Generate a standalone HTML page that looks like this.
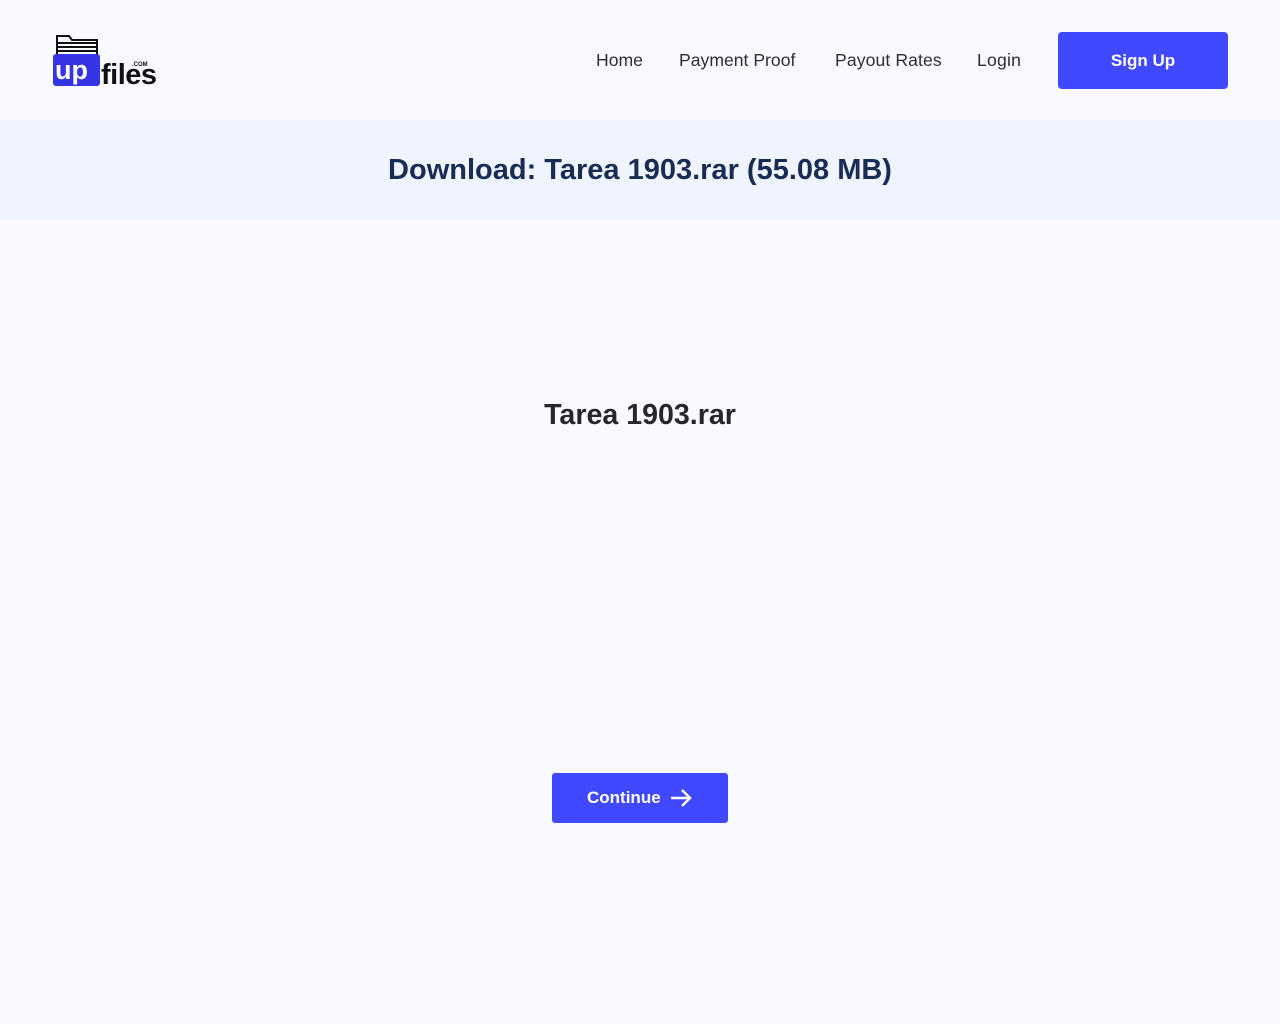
<!DOCTYPE html>
<html><head><meta charset="utf-8"><style>
*{margin:0;padding:0;box-sizing:border-box}
body{width:1280px;height:1024px;background:#f8faff;font-family:"Liberation Sans",sans-serif;position:relative;overflow:hidden}
.nav a{position:absolute;top:49px;font-size:17.6px;color:#2d2d35;text-decoration:none;line-height:22px}
.signup{position:absolute;left:1058px;top:32px;width:170px;height:57px;background:#4049ff;border-radius:4px;color:#fff;font-weight:bold;font-size:17px;text-align:center;line-height:57px}
.band{position:absolute;left:0;top:120px;width:1280px;height:100px;background:#f0f4ff;text-align:center;font-size:29px;font-weight:bold;color:#182c55;line-height:100px}
.fname{position:absolute;left:0;width:1280px;top:399px;text-align:center;font-size:28.6px;font-weight:bold;color:#26262e}
.cont{position:absolute;left:552px;top:773px;width:176px;height:50px;background:#4049ff;border-radius:3px;color:#fff;font-weight:bold;font-size:17px;line-height:50px;padding-left:35px}
.cont svg{position:absolute;left:118px;top:16px}
</style></head><body>
<svg style="position:absolute;left:52px;top:33px" width="110" height="55" viewBox="0 0 110 55">
<path d="M5 22V3h12l3 4h25v15" fill="none" stroke="#111" stroke-width="2"/>
<path d="M6 10h38M6 14h38M6 18h38" stroke="#111" stroke-width="2"/>
<rect x="1" y="21" width="47" height="32" rx="3" fill="#3535e6"/>
<text x="3" y="46" font-family="Liberation Sans" font-weight="bold" font-size="27" fill="#fff">up</text>
<text x="49" y="51" font-family="Liberation Sans" font-weight="bold" font-size="29" fill="#111" letter-spacing="-0.5">files</text>
<text x="80" y="33" font-family="Liberation Sans" font-weight="bold" font-size="6" fill="#111">.COM</text>
</svg>
<div class="nav">
<a style="left:596px">Home</a>
<a style="left:679px">Payment Proof</a>
<a style="left:835px;letter-spacing:0.1px">Payout Rates</a>
<a style="left:977px;letter-spacing:0.2px">Login</a>
</div>
<div class="signup">Sign Up</div>
<div class="band">Download: Tarea 1903.rar (55.08 MB)</div>
<div class="fname">Tarea 1903.rar</div>
<div class="cont">Continue<svg width="22" height="18" viewBox="0 0 22 18"><path d="M1 9h19M12 1l8 8-8 8" fill="none" stroke="#fff" stroke-width="2.4"/></svg></div>
</body></html>
